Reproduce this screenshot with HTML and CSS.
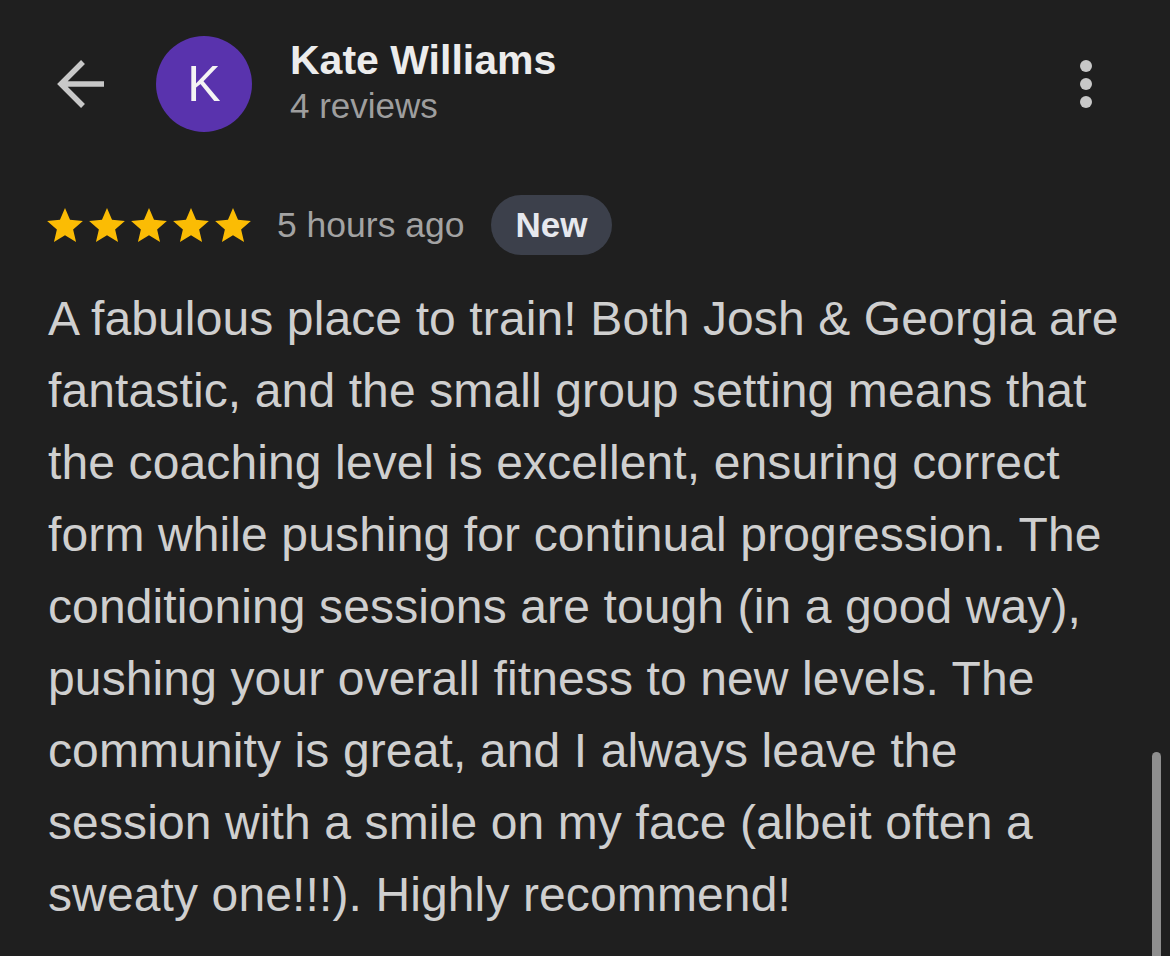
FILE: index.html
```
<!doctype html>
<html>
<head>
  <title>Review</title>
  <link rel="stylesheet" href="styles.css">
</head>
<body>

	<div class="review">
		<div class="review-header">
			<svg class="back" width="48" height="48" viewBox="0 0 48 48">
				<path d="M48 24H5M27 2L5 24l22 22" fill="none" stroke="#c8c8c8" stroke-width="5.5"/>
			</svg>
			<div class="avatar">K</div>
			<div class="author">
				<div class="author-name">Kate Williams</div>
				<div class="author-meta">4 reviews</div>
			</div>
			<svg class="more" width="12" height="48" viewBox="0 0 12 48">
				<circle cx="6" cy="6" r="6" fill="#c8c8c8"/>
				<circle cx="6" cy="24" r="6" fill="#c8c8c8"/>
				<circle cx="6" cy="42" r="6" fill="#c8c8c8"/>
			</svg>
		</div>

		<div class="review-meta">
			<div class="stars">
				<svg width="36" height="34" viewBox="2 2 20 19"><path d="M12 17.27L18.18 21l-1.64-7.03L22 9.24l-7.19-.61L12 2 9.19 8.63 2 9.24l5.46 4.73L5.82 21z"/></svg>
				<svg width="36" height="34" viewBox="2 2 20 19"><path d="M12 17.27L18.18 21l-1.64-7.03L22 9.24l-7.19-.61L12 2 9.19 8.63 2 9.24l5.46 4.73L5.82 21z"/></svg>
				<svg width="36" height="34" viewBox="2 2 20 19"><path d="M12 17.27L18.18 21l-1.64-7.03L22 9.24l-7.19-.61L12 2 9.19 8.63 2 9.24l5.46 4.73L5.82 21z"/></svg>
				<svg width="36" height="34" viewBox="2 2 20 19"><path d="M12 17.27L18.18 21l-1.64-7.03L22 9.24l-7.19-.61L12 2 9.19 8.63 2 9.24l5.46 4.73L5.82 21z"/></svg>
				<svg width="36" height="34" viewBox="2 2 20 19"><path d="M12 17.27L18.18 21l-1.64-7.03L22 9.24l-7.19-.61L12 2 9.19 8.63 2 9.24l5.46 4.73L5.82 21z"/></svg>
			</div>
			<span class="time">5 hours ago</span>
			<span class="badge">New</span>
		</div>

		<p class="review-text">A fabulous place to train! Both Josh &amp; Georgia are fantastic, and the small group setting means that the coaching level is excellent, ensuring correct form while pushing for continual progression. The conditioning sessions are tough (in a good way), pushing your overall fitness to new levels. The community is great, and I always leave the session with a smile on my face (albeit often a sweaty one!!!). Highly recommend!</p>
	</div>

	<div class="scrollbar"></div>

</body>
</html>
```

FILE: styles.css
```
	html, body {height: 100%}
	body {
		margin: 0;
		padding: 0;
		background: #1f1f1f;
		font-family: "Liberation Sans", Arial, sans-serif;
		overflow: hidden;
	}

	.review-header {
		display: flex;
		align-items: center;
		padding: 36px 78px 0 56px;
	}
	.back {
		display: block;
		margin-right: 52px;
	}
	.avatar {
		width: 96px;
		height: 96px;
		border-radius: 50%;
		background: #5933ad;
		color: #f4f4f4;
		font-size: 50px;
		line-height: 96px;
		text-align: center;
	}
	.author {
		margin-left: 38px;
		margin-top: -2px;
	}
	.author-name {
		font-size: 41px;
		font-weight: bold;
		line-height: 46px;
		color: #ececec;
	}
	.author-meta {
		font-size: 35px;
		line-height: 46px;
		color: #9e9e9e;
	}
	.more {
		display: block;
		margin-left: auto;
	}

	.review-meta {
		display: flex;
		align-items: center;
		height: 60px;
		margin-top: 63px;
		padding-left: 47px;
	}
	.stars {
		display: flex;
		gap: 6px;
	}
	.stars svg {
		display: block;
		fill: #fbbc04;
	}
	.time {
		margin-left: 26px;
		font-size: 35.5px;
		color: #a3a3a3;
	}
	.badge {
		margin-left: 26px;
		padding: 0 25px;
		height: 60px;
		line-height: 60px;
		border-radius: 30px;
		background: #3c404b;
		color: #e6e8ee;
		font-size: 35px;
		font-weight: bold;
	}

	.review-text {
		margin: 28px 0 0;
		padding: 0 48px;
		font-size: 48px;
		line-height: 72px;
		letter-spacing: 0.12px;
		color: #cfcfcf;
	}

	.scrollbar {
		position: absolute;
		right: 9px;
		top: 752px;
		bottom: 0;
		width: 9px;
		border-radius: 5px 5px 0 0;
		background: #8e8e8e;
	}
```
